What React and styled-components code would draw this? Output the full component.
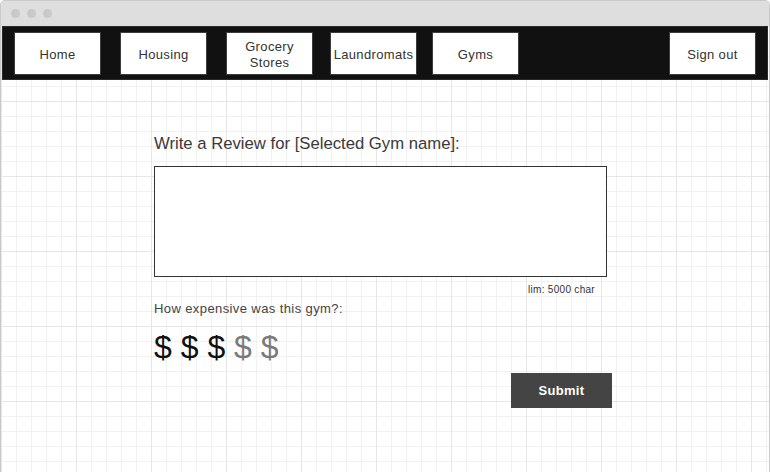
import React from "react";
import styled, { createGlobalStyle } from "styled-components";

const Global = createGlobalStyle`
  html, body { margin: 0; padding: 0; background: #ffffff; }
  body { font-family: "Liberation Sans", Arial, sans-serif; }
  * { box-sizing: border-box; }
`;

const Window = styled.div`
  width: 770px;
  height: 472px;
  border: 1px solid #c9c9c9;
  border-bottom: none;
  border-radius: 5px 5px 0 0;
  display: flex;
  flex-direction: column;
  overflow: hidden;
  background: #fff;
`;

const TitleBar = styled.div`
  height: 25px;
  flex: none;
  background: #dedede;
  display: flex;
  align-items: center;
  gap: 7px;
  padding-left: 10px;
`;

const Dot = styled.span`
  width: 9px;
  height: 9px;
  border-radius: 50%;
  background: #c9c9c9;
`;

const Body = styled.div`
  flex: 1;
  display: flex;
  flex-direction: column;
  background-color: #fff;
  background-image:
    linear-gradient(to right, #e6e6e6 1px, transparent 1px),
    linear-gradient(to bottom, #e6e6e6 1px, transparent 1px),
    linear-gradient(to right, #f1f1f1 1px, transparent 1px),
    linear-gradient(to bottom, #f1f1f1 1px, transparent 1px);
  background-size: 75px 75px, 75px 75px, 15px 15px, 15px 15px;
  background-position: 0 0;
`;

const Nav = styled.nav`
  height: 54px;
  margin: 0 1px;
  background: #111111;
  border: 1px solid #2a2a2a;
  display: flex;
  align-items: center;
  padding-left: 11px;
  padding-right: 11px;
`;

const NavButton = styled.div`
  width: 87px;
  height: 43px;
  margin-left: ${(p) => p.$ml || 0}px;
  background: #fff;
  border: 1px solid #3c3c3c;
  display: flex;
  align-items: center;
  justify-content: center;
  text-align: center;
  padding-top: ${(p) => (p.$drop ? 4 : 3)}px;
  font-size: 13px;
  line-height: 16px;
  letter-spacing: 0.35px;
  color: #333;
  ${(p) => p.$right && "margin-left: auto;"}
`;

const Content = styled.main`
  flex: 1;
  padding: 54px 0 0 153px;
`;

const Form = styled.div`
  width: 458px;
  display: flex;
  flex-direction: column;
`;

const Title = styled.h1`
  margin: 0;
  font-size: 16.7px;
  line-height: 20px;
  font-weight: normal;
  color: #3a3a3a;
`;

const ReviewBox = styled.textarea`
  margin-top: 12px;
  width: 453px;
  height: 111px;
  border: 1px solid #333;
  background: #fff;
  resize: none;
  outline: none;
  font-family: inherit;
`;

const Limit = styled.div`
  align-self: flex-start;
  width: 441px;
  text-align: right;
  margin-top: 7px;
  font-size: 10px;
  line-height: 12px;
  letter-spacing: 0.3px;
  color: #333;
`;

const Question = styled.div`
  margin-top: 5px;
  font-size: 13px;
  line-height: 15px;
  letter-spacing: 0.4px;
  color: #444;
`;

const Price = styled.div`
  margin-top: 13px;
  font-size: 32px;
  line-height: 37px;
  display: flex;
`;

const Sign = styled.span`
  color: ${(p) => (p.$on ? "#111" : "#7a7a7a")};
  width: 26.7px;
`;

const Submit = styled.button`
  align-self: flex-end;
  margin-top: 7px;
  width: 101px;
  height: 35px;
  background: #444;
  border: none;
  color: #fff;
  font-family: inherit;
  font-weight: bold;
  font-size: 13px;
  letter-spacing: 0.3px;
  padding: 0;
`;

export default function App() {
  const levels = [true, true, true, false, false];
  return (
    <>
      <Global />
      <Window>
        <TitleBar>
          <Dot />
          <Dot />
          <Dot />
        </TitleBar>
        <Body>
          <Nav>
            <NavButton>Home</NavButton>
            <NavButton $ml={19}>Housing</NavButton>
            <NavButton $ml={19}>
              Grocery
              <br />
              Stores
            </NavButton>
            <NavButton $ml={17}>Laundromats</NavButton>
            <NavButton $ml={15} $drop>
              Gyms
            </NavButton>
            <NavButton $right>Sign out</NavButton>
          </Nav>
          <Content>
            <Form>
              <Title>Write a Review for [Selected Gym name]:</Title>
              <ReviewBox />
              <Limit>lim: 5000 char</Limit>
              <Question>How expensive was this gym?:</Question>
              <Price>
                {levels.map((on, i) => (
                  <Sign key={i} $on={on}>
                    $
                  </Sign>
                ))}
              </Price>
              <Submit>Submit</Submit>
            </Form>
          </Content>
        </Body>
      </Window>
    </>
  );
}
